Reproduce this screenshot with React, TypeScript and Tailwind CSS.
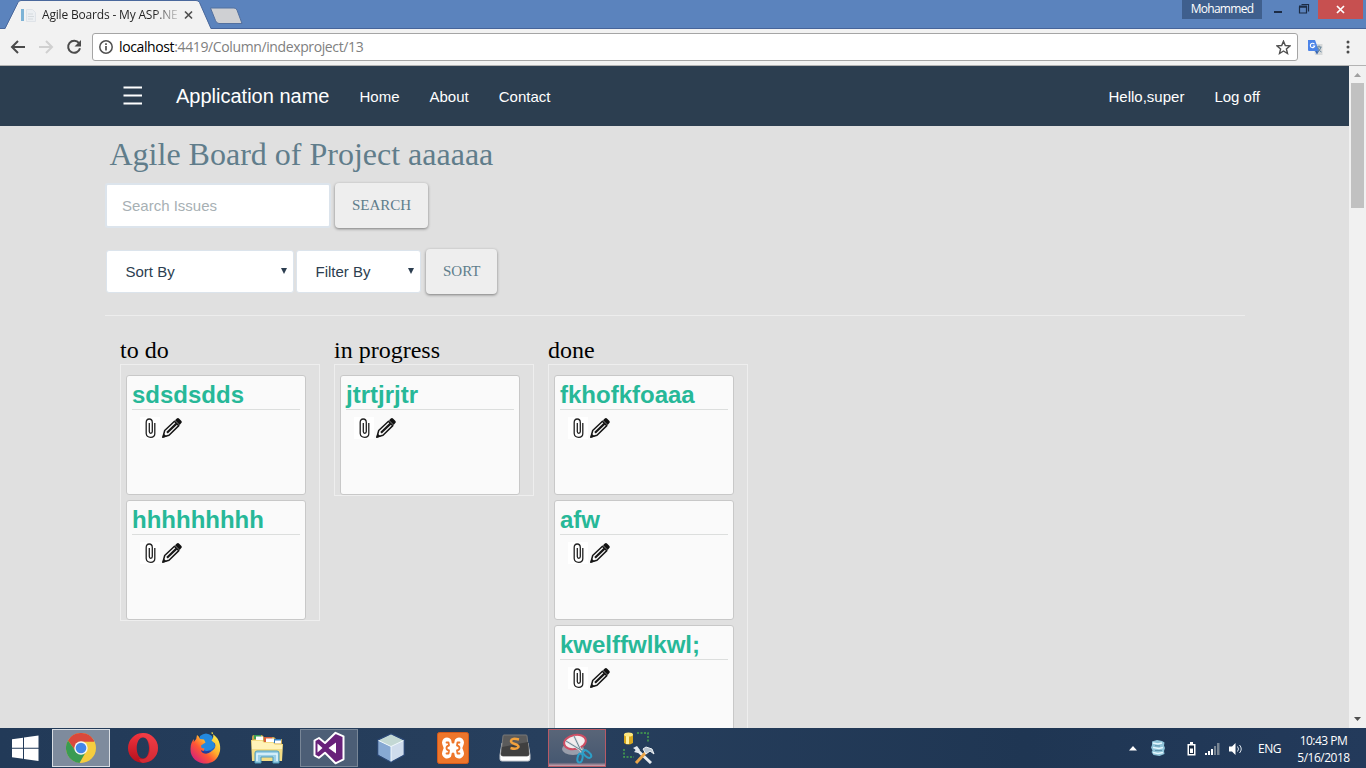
import type { ReactNode } from "react";

const board = [
  { name: "to do", issues: ["sdsdsdds", "hhhhhhhhh"] },
  { name: "in progress", issues: ["jtrtjrjtr"] },
  { name: "done", issues: ["fkhofkfoaaa", "afw", "kwelffwlkwl;"] },
];

function TabStrip() {
  return (
    <div className="relative flex h-[29px] shrink-0 items-start bg-[#5b83bd]">
      <svg className="absolute left-0 top-0" width="250" height="29" viewBox="0 0 250 29">
        <path d="M0 28.5H250" stroke="#46649a" />
        <path d="M5 29 L18 2.5 Q18.800 0.500 21 .5 H196 Q198.500 .5 199.500 2.500 L211 29 Z" fill="#f2f2f2" />
        <path d="M0 28.500 H5 L18 2.500 Q19 .5 21 .5 H196 Q198.500 .5 199.500 2.500 L211 28.500" fill="none" stroke="#4a689c" />
        <path d="M210.500 8 H234 Q236 8 237 10 L242 23.500 H219 Q216.500 23.500 215.500 20.500 Z" fill="#cfd0d3" stroke="#53709f" />
      </svg>
      <div className="absolute inset-x-0 bottom-0 ml-[211px] h-px bg-[#46649a]" />
      <div className="relative flex h-[29px] w-[211px] items-center pl-[21px]">
        <svg width="15" height="16" viewBox="0 0 15 16">
          <rect x="0" y="2" width="3" height="12" fill="#7db3d6" />
          <path d="M5.500 2.500h6l3 3v9h-9z" fill="#eceff2" stroke="#dfe3e8" />
          <path d="M7 7h5M7 9.500h6M7 12h5" stroke="#d5dade" />
        </svg>
        <div className="ml-[6px] w-[142px] whitespace-nowrap bg-[linear-gradient(90deg,#222_0,#222_112px,#f2f2f2_140px)] bg-clip-text font-['Open_Sans',sans-serif] text-[12px] tracking-[-0.18px] text-transparent">
          Agile Boards - My ASP.NE
        </div>
        <svg width="10" height="10" viewBox="0 0 10 10">
          <path d="M1 1.500l7 7M8 1.500l-7 7" stroke="#505050" strokeWidth="1.700" />
        </svg>
      </div>
      <div className="ml-auto flex h-5 items-start">
        <div className="flex h-[19px] w-[80px] items-center justify-center bg-[#3f5f8d] pb-px font-['Open_Sans',sans-serif] text-[12px] tracking-[-0.7px] text-white">
          Mohammed
        </div>
        <svg width="56" height="19" viewBox="0 0 56 19" fill="none" stroke="#1c2c45">
          <path d="M12 12h8" strokeWidth="2" />
          <path d="M39.500 4.500h7v7M37.500 7h7v6h-7z" strokeWidth="1.200" />
          <path d="M37 6.500h8" strokeWidth="2" />
        </svg>
        <div className="flex h-[19px] w-[45px] items-center justify-center bg-[#c75050]">
          <svg width="9" height="9" viewBox="0 0 9 9">
            <path d="M1 1l7 7M8 1l-7 7" stroke="#fff" strokeWidth="1.700" />
          </svg>
        </div>
        <div className="w-[3px]" />
      </div>
    </div>
  );
}

function Toolbar() {
  return (
    <div className="flex h-[37px] shrink-0 items-center border-b border-[#b3b3b3] bg-[#f2f2f2] pl-[10px]">
      <svg width="16" height="16" viewBox="0 0 16 16" fill="none" stroke="#4b4b4b" strokeWidth="2">
        <path d="M15 8H2.500M8 2L2 8l6 6" />
      </svg>
      <svg className="ml-[12px]" width="16" height="16" viewBox="0 0 16 16" fill="none" stroke="#d0d0d0" strokeWidth="2">
        <path d="M1 8h12.500M8 2l6 6-6 6" />
      </svg>
      <svg className="ml-[12px]" width="16" height="16" viewBox="0 0 16 16">
        <path d="M13 4.200A6 6 0 1 0 14 9.200" fill="none" stroke="#4b4b4b" strokeWidth="2" />
        <path d="M15 1v6.500H8.500z" fill="#4b4b4b" />
      </svg>
      <div className="ml-[10px] flex h-[28px] w-[1206px] items-center rounded-[3px] border border-[#a5a5a5] bg-white pl-[6px] pr-[6px]">
        <svg width="14" height="14" viewBox="0 0 14 14">
          <circle cx="7" cy="7" r="6.200" fill="none" stroke="#505050" strokeWidth="1.500" />
          <path d="M7 6v4.500M7 3.200v1.800" stroke="#505050" strokeWidth="1.700" />
        </svg>
        <div className="ml-[6px] pb-px font-['Open_Sans',sans-serif] text-[14px] tracking-[-0.38px] text-[#808080]">
          <span className="text-black">localhost</span>:4419/Column/indexproject/13
        </div>
        <svg className="ml-auto" width="15" height="15" viewBox="0 0 15 15">
          <path d="M7.500 1.200l1.800 4.300 4.700.4-3.600 3 1.100 4.600-4-2.500-4 2.500 1.100-4.600-3.600-3 4.700-.4z" fill="none" stroke="#505050" strokeWidth="1.400" />
        </svg>
      </div>
      <svg className="ml-[9px]" width="17" height="17" viewBox="0 0 17 17">
        <path d="M6 5h9.500v11H8z" fill="#d7d9da" />
        <path d="M1 1h7l4 11H2q-1 0-1-1z" fill="#4c84e8" />
        <path d="M8 12h4l-2 3.500z" fill="#3565b5" />
        <path d="M9.500 8h5M12 6.500v1.500M14 8q-1 4-4 5M11 9q1 3 3.500 4" fill="none" stroke="#65849a" />
        <path d="M7.400 5.200A2.200 2.200 0 1 0 7.700 7H5.700" fill="none" stroke="#fff" strokeWidth="1.100" />
      </svg>
      <svg className="ml-[22px]" width="4" height="16" viewBox="0 0 4 16" fill="#4b4b4b">
        <circle cx="2" cy="3" r="1.500" />
        <circle cx="2" cy="8" r="1.500" />
        <circle cx="2" cy="13" r="1.500" />
      </svg>
    </div>
  );
}

function NavBar() {
  return (
    <nav className="flex h-[60px] shrink-0 items-center bg-[#2c3e50] pb-px pl-[123px] pr-[89px] text-[15px] text-white">
      <svg width="20" height="20" viewBox="0 0 20 20">
        <path d="M0.500 1.500h18.500M0.500 9.500h18.500M0.500 17.500h18.500" stroke="#fff" strokeWidth="2.200" />
      </svg>
      <span className="ml-[33px] w-[153px] whitespace-nowrap text-[20px]">Application name</span>
      <div className="ml-[30.5px] flex gap-[30px] pt-[4px]">
        <span>Home</span>
        <span>About</span>
        <span>Contact</span>
      </div>
      <div className="ml-auto flex gap-[30px] pt-[4px]">
        <span>Hello,super</span>
        <span>Log off</span>
      </div>
    </nav>
  );
}

function RaisedButton({ children }: { children: ReactNode }) {
  return (
    <button className="h-[45px] rounded-[4px] bg-[#eee] px-[17px] font-['Liberation_Serif',serif] text-[15px] text-[#607d8b] shadow-[0_1px_3px_rgba(0,0,0,0.45)]">
      {children}
    </button>
  );
}

function SelectBox({ label, width }: { label: string; width: string }) {
  return (
    <div className={`${width} flex h-[43px] items-center justify-between rounded-[3px] border border-[#dce4ec] bg-white pl-[18.500px] pr-[5px] text-[15px] text-[#2c3e50]`}>
      <span className="pt-[2px]">{label}</span>
      <svg width="8" height="7" viewBox="0 0 8 7">
        <path d="M1 0h6L4 6z" fill="#2c3e50" />
      </svg>
    </div>
  );
}

function IssueCard({ title }: { title: string }) {
  return (
    <div className="h-[120px] w-[180px] shrink-0 rounded-[3px] border border-[#c8c8c8] bg-[#fafafa] px-[5px]">
      <div className="h-[34px] border-b border-[#dcdedd] pt-[3px] text-[24px] font-bold leading-[32px] text-[#27b898]">{title}</div>
      <div className="flex pl-[8px] pt-[7px]">
        <svg className="bg-white" width="20" height="22" viewBox="0 0 20 22" fill="none" stroke="#222" strokeWidth="1.300">
          <path d="M14.800 6V16.500Q14.800 20.300 10.700 20.300T6.200 16.500V5.500Q6.200 2 9.200 2T12.300 5.500V14.500Q12.300 16.300 10.800 16.300T9.300 14.500V6" />
        </svg>
        <svg className="ml-[2px]" width="20" height="22" viewBox="0 0 20 22">
          <path d="M1 20L2.700 13.500 12.500 4.300l4.300 4.300L7 18.300z" fill="#fafafa" stroke="#161616" strokeWidth="1.500" strokeLinejoin="round" />
          <path d="M5 15.700L14.500 6.600" stroke="#161616" strokeWidth="2.200" />
          <path d="M0 21l1.500-4.500 3.300 3z" fill="#161616" />
          <path d="M13 3.200l1.800-1.600q1.200-1 2.400.1l2 2q1.200 1.200.1 2.400L17.700 8z" fill="#111" />
        </svg>
      </div>
    </div>
  );
}

function ScrollBar() {
  return (
    <div className="flex w-[17px] shrink-0 flex-col items-center bg-[#f1f1f1]">
      <svg width="17" height="17" viewBox="0 0 17 17">
        <path d="M5 11l3.500-4L12 11z" fill="#a0a0a0" />
      </svg>
      <div className="h-[125px] w-[13px] bg-[#c1c1c1]" />
      <svg className="mt-auto" width="17" height="17" viewBox="0 0 17 17">
        <path d="M5 6h7l-3.500 4z" fill="#505050" />
      </svg>
    </div>
  );
}

function WindowsLogo() {
  return (
    <svg width="27" height="27" viewBox="0 0 27 27" fill="#fff">
      <path d="M0 4.300L11 2.700v10H0zM12 2.500L26.500.5v12.200H12zM0 13.800h11v10L0 22.200zM12 13.800h14.500V26L12 24z" />
    </svg>
  );
}

function Chrome() {
  return (
    <svg width="30" height="30" viewBox="0 0 30 30">
      <circle cx="15" cy="15" r="15" fill="#f5cd3f" />
      <path d="M2 7.500A15 15 0 0 1 28 7.500L28 8.800H15A6.200 6.200 0 0 0 9.200 17.500z" fill="#d9493c" />
      <path d="M2 7.500A15 15 0 0 0 13.500 30L20.400 18A6.200 6.200 0 0 1 9.600 18z" fill="#3a9b52" />
      <circle cx="15" cy="15" r="6.700" fill="#f3f5f4" />
      <circle cx="15" cy="15" r="5.300" fill="#4386e8" />
    </svg>
  );
}

function Opera() {
  return (
    <svg width="30" height="30" viewBox="0 0 30 30">
      <defs>
        <linearGradient id="op" x2="0" y2="1">
          <stop stopColor="#f3343e" />
          <stop offset="1" stopColor="#b5101d" />
        </linearGradient>
      </defs>
      <path fillRule="evenodd" d="M15 0a15 15 0 1 0 0 30 15 15 0 0 0 0-30zM15 4.500c3.800 0 6 4.800 6 10.500s-2.200 10.500-6 10.500S8.700 20.700 8.700 15 11.200 4.500 15 4.500z" fill="url(#op)" />
      <path d="M15 0a15 15 0 0 1 0 30q-3-1-4-4 4 1 7-1 4-4 4-10T18 5q-3-2-7-1 1-3 4-4z" fill="#f34a50" opacity=".45" />
    </svg>
  );
}

function Firefox() {
  return (
    <svg width="31" height="32" viewBox="0 0 31 32">
      <defs>
        <linearGradient id="ff" x1=".9" y1=".1" x2=".15" y2=".9">
          <stop stopColor="#fff14f" />
          <stop offset=".4" stopColor="#ffb02d" />
          <stop offset=".65" stopColor="#ff5634" />
          <stop offset="1" stopColor="#d82476" />
        </linearGradient>
      </defs>
      <circle cx="16" cy="15" r="11.500" fill="#285fc2" />
      <path d="M10 4q6-5 12 0l3 11-7 5-9-5z" fill="#2389df" />
      <path d="M21 1c8 4 10 12 9 18-2 9-8 12.500-15 12.500S0 26 .5 17C.6 12 2 9 4 7l-.3 3 2.500-3L7 3q2 1 3 4l4 .5 1.500 3-4.500 3 .5 2.500 3 .5-1 3q5 3 9-1 4-3 2.500-7l-3.500-3q3-3 1-8.500z" fill="url(#ff)" />
      <path d="M11 18q3 2 6 1 3-1 4 0-3 4-8 2-2-1-2-3z" fill="#253e9b" />
    </svg>
  );
}

function Explorer() {
  return (
    <svg width="34" height="32" viewBox="0 0 34 32">
      <path d="M2 5q0-2 2-2h8l2 2h10l2 2h6v20H2z" fill="#c7a44d" />
      <path d="M4 3h7v4H4z" fill="#3a9f58" /><path d="M14 5h8v5h-8z" fill="#d75f3c" /><path d="M22 7h9v4h-9z" fill="#327fc0" />
      <path d="M6 4.500h7v4H6zM16 6.500h8v4h-8zM25 8.500h6v3h-6z" fill="#fff" />
      <path d="M1 8h11l2 2h9l2 2h8l-1 17H2z" fill="#f4dd85" />
      <path d="M2 9h10l2 2h9l2 2h7v4H2z" fill="#fff3b8" />
      <path d="M5 31V21q0-2 2-2h20q2 0 2 2v10h-6v-6H11v6z" fill="#9bcfe6" stroke="#4d9bbb" />
      <path d="M7 29v-7h20v7" fill="none" stroke="#e5f7ff" strokeWidth="1.500" />
    </svg>
  );
}

function VisualStudio() {
  return (
    <svg width="34" height="34" viewBox="0 0 34 34">
      <path d="M23.500 1.800l8 3.500v23l-8 4-10.500-10.500-6 5-4.500-2.500V9.500L7 7l6 5z" fill="#68217a" stroke="#fff" strokeWidth="2" strokeLinejoin="round" />
      <path d="M5.500 12.500v9l5-4.500zM24 11.500L16.500 17l7.500 5.500z" fill="#fff" />
    </svg>
  );
}

function NetBeans() {
  return (
    <svg width="28" height="30" viewBox="0 0 28 30">
      <path d="M14 1l13 6v15l-13 7L1 22V7z" fill="#d3e6f6" stroke="#2d4a78" strokeWidth="1.500" />
      <path d="M1.500 7.500l12.500 6v15L1.500 21.800z" fill="#87a9d3" />
      <path d="M14 13.500l12.500-6v14.300L14 28.500z" fill="#cfdcec" />
      <path d="M14 1.500l12.500 6-12.500 6-12.500-6z" fill="#c3d8d4" />
      <path d="M1.500 7.500l12.500 6 12.500-6M14 13.500v15" fill="none" stroke="#f4fbff" strokeWidth=".9" />
    </svg>
  );
}

function Xampp() {
  return (
    <svg width="32" height="32" viewBox="0 0 32 32">
      <rect x=".5" y=".5" width="31" height="31" rx="2" fill="#ee762b" stroke="#d45a1b" />
      <g fill="none" strokeLinecap="round" strokeLinejoin="round">
        <path d="M10 10.500L12 16 10 21.500M22 10.500L20 16 22 21.500M12 16H20" stroke="#fff" strokeWidth="10" />
        <path d="M16 5V10M16 27V22" stroke="#ee762b" strokeWidth="3" />
        <path d="M9.500 10.500H11.500L12 13.500Q9.500 14 9.500 16T12 18.500L11.500 21.500H9.500M22.500 10.500H20.500L20 13.500Q22.500 14 22.500 16T20 18.500L20.500 21.500H22.500" stroke="#ee762b" strokeWidth="1.800" />
      </g>
    </svg>
  );
}

function Sublime() {
  return (
    <svg width="32" height="28" viewBox="0 0 32 28">
      <path d="M3 9h26l2 12v4q0 2-2 2H3q-2 0-2-2v-4z" fill="#fff" stroke="#c7cbd0" />
      <path d="M4 2q0-1 1-1h22q1 0 1 1l2 18q0 2-2 2H4q-2 0-2-2z" fill="#5b5b5b" stroke="#797979" />
      <path d="M3 13l26-5 1 12q0 2-2 2H4q-2 0-2-2z" fill="#404040" />
      <path d="M20 5.500Q12.500 3.500 12 7C11.500 10.500 20 9.500 19.500 13Q18 16 11.500 14" fill="none" stroke="#f2a13c" strokeWidth="2.500" />
    </svg>
  );
}

function Snipping() {
  return (
    <svg width="32" height="31" viewBox="0 0 32 31">
      <ellipse cx="12" cy="16" rx="11" ry="6" fill="#999eab" />
      <ellipse cx="14" cy="9" rx="11" ry="7" transform="rotate(-12 14 9)" fill="#f4edef" stroke="#cd4e64" strokeWidth="2" />
      <path d="M13 3l8 17M5 8l18 11" stroke="#d5dfe5" strokeWidth="2.500" />
      <path d="M13 3l8 17M5 8l18 11" stroke="#71838f" strokeWidth="1" />
      <ellipse cx="19" cy="25" rx="2.500" ry="4.500" transform="rotate(12 19 25)" fill="none" stroke="#2c9fc8" strokeWidth="2" />
      <ellipse cx="26" cy="21" rx="2.500" ry="5" transform="rotate(-50 26 21)" fill="none" stroke="#2c9fc8" strokeWidth="2" />
    </svg>
  );
}

function SqlTools() {
  return (
    <svg width="32" height="32" viewBox="0 0 32 32">
      <path d="M1 2v9q4 3 9 0V2z" fill="#d8a71e" />
      <path d="M3 2v10h3V2z" fill="#fff1a0" />
      <ellipse cx="5.500" cy="2.500" rx="4.500" ry="2" fill="#ffe780" />
      <path d="M14 1h11v10M1 17v8h10" fill="none" stroke="#47a54e" strokeWidth="1.500" strokeDasharray="2 1.500" />
      <path d="M13 17l15 14" stroke="#e7ecf1" strokeWidth="3" />
      <path d="M13 31l12-13" stroke="#eba64a" strokeWidth="3" />
      <path d="M20 17l3-2 6 2 2 5-4-3-4 3z" fill="#bac5cf" stroke="#edf1f4" />
      <path d="M10 16l4-2 3 4-2 3-4-1 2-2z" fill="#e2e7ed" />
    </svg>
  );
}

function TaskSlot({ children, tone = "border-transparent" }: { children: ReactNode; tone?: string }) {
  return <div className={`${tone} flex h-[38px] w-[58px] items-center justify-center border`}>{children}</div>;
}

function TaskBar() {
  return (
    <footer className="flex h-10 shrink-0 items-center bg-[#233b5b] bg-[linear-gradient(90deg,#223a58,#273f5d_40%,#1f3653_75%,#233a5b)] font-['Open_Sans',sans-serif] text-white">
      <div className="flex w-[52px] items-center pl-[12px]"><WindowsLogo /></div>
      <div className="flex gap-[4px]">
        <TaskSlot tone="border-[#d8dde3] bg-[#7e8b9d]"><Chrome /></TaskSlot>
        <TaskSlot><Opera /></TaskSlot>
        <TaskSlot><Firefox /></TaskSlot>
        <TaskSlot><Explorer /></TaskSlot>
        <TaskSlot tone="border-[#788697] bg-[#4c5e76]"><VisualStudio /></TaskSlot>
        <TaskSlot><NetBeans /></TaskSlot>
        <TaskSlot><Xampp /></TaskSlot>
        <TaskSlot><Sublime /></TaskSlot>
        <TaskSlot tone="border-[#b85a66] bg-[linear-gradient(180deg,#596578,#465871_90%,#d2a2ac)]"><Snipping /></TaskSlot>
        <TaskSlot><SqlTools /></TaskSlot>
      </div>
      <div className="ml-auto flex items-center pr-[16px]">
        <svg width="8" height="6" viewBox="0 0 8 6"><path d="M0 5.500L4 1l4 4.500z" fill="#fff" /></svg>
        <svg className="ml-[13px]" width="16" height="16" viewBox="0 0 16 16">
          <path d="M2 1.500l5-1.500 5 1 2.500 1.500-.5 3 1 2.500-1 3 .5 3-5 2-6-1-2-3 1-1.500-1.500-3L2 5z" fill="#8fc3d8" />
          <path d="M3 3l5 1 4-1M3 7.500l6 1 4-1M3 12.500l5 1 5-1" fill="none" stroke="#e4f7ff" strokeWidth="1.500" />
          <path d="M5 5.700l5 .3M5 10.500h7" stroke="#5c91ab" />
        </svg>
        <svg className="ml-[21px] mt-[2px]" width="9" height="14" viewBox="0 0 9 14">
          <path d="M3 0h3v2h2.500v11.500H.5V2H3z" fill="#fff" /><path d="M2 3.500h5v8.500H2z" fill="#17283f" /><path d="M3 6.500h3V11H3z" fill="#fff" />
        </svg>
        <svg className="ml-[9px] mt-[2px]" width="15" height="13" viewBox="0 0 15 13">
          <path d="M0 10h2v2H0zM3 8h2v4H3zM6 6h2v6H6z" fill="#fff" /><path d="M9 3h2v9H9zM12 0h2.500v12H12z" fill="#788593" />
        </svg>
        <svg className="ml-[9px] mt-[2px]" width="14" height="14" viewBox="0 0 14 14">
          <path d="M0 4.500h3L6.500 1v12L3 9.500H0z" fill="#fff" /><path d="M8.500 4.500q2 2.500 0 5M10.500 3q3.500 4 0 8" fill="none" stroke="#dce5ed" />
        </svg>
        <span className="ml-[15px] w-[23px] pt-px text-[12px] tracking-[-0.5px]">ENG</span>
        <div className="ml-[16px] w-[53px] whitespace-nowrap pt-px text-center text-[12px] leading-[17px] tracking-[-0.5px]">
          <div>10:43 PM</div>
          <div>5/16/2018</div>
        </div>
      </div>
    </footer>
  );
}

export default function App() {
  return (
    <div className="flex h-[768px] w-[1366px] flex-col overflow-hidden font-['Liberation_Sans',Arial,sans-serif]">
      <TabStrip />
      <Toolbar />
      <div className="flex h-[662px] shrink-0">
        <div className="flex w-[1349px] flex-col overflow-hidden bg-[#e0e0e0]">
          <NavBar />
          <main className="pl-[105px] pr-[104px]">
            <h1 className="pl-[4.500px] pt-[7px] font-['Liberation_Serif',serif] text-[32px] leading-[42px] text-[#607d8b]">Agile Board of Project aaaaaa</h1>
            <div className="mt-[8px] flex items-center gap-[4px]">
              <div className="flex h-[45px] w-[226px] items-center rounded-[3px] border-2 border-[#dce4ec] bg-white pl-[15px] pt-[2px] text-[15px] text-[#a7b0b4]">Search Issues</div>
              <RaisedButton>SEARCH</RaisedButton>
            </div>
            <div className="mt-[21px] flex items-center gap-[2px] pl-px">
              <SelectBox label="Sort By" width="w-[188px]" />
              <SelectBox label="Filter By" width="w-[125px]" />
              <div className="ml-[3px] flex">
                <RaisedButton>SORT</RaisedButton>
              </div>
            </div>
            <hr className="mt-[21px] border-[#ededed]" />
            <div className="flex items-start gap-[14px] pl-[15px] pt-[20px]">
              {board.map((column) => (
                <section key={column.name} className="w-[200px]">
                  <h2 className="h-[28px] font-['Liberation_Serif',serif] text-[24px] leading-[29px] text-black">{column.name}</h2>
                  <div className="flex flex-col gap-[5px] border border-[#eee] pl-[5px] pt-[10px]">
                    {column.issues.map((issue) => (
                      <IssueCard key={issue} title={issue} />
                    ))}
                  </div>
                </section>
              ))}
            </div>
          </main>
        </div>
        <ScrollBar />
      </div>
      <TaskBar />
    </div>
  );
}
